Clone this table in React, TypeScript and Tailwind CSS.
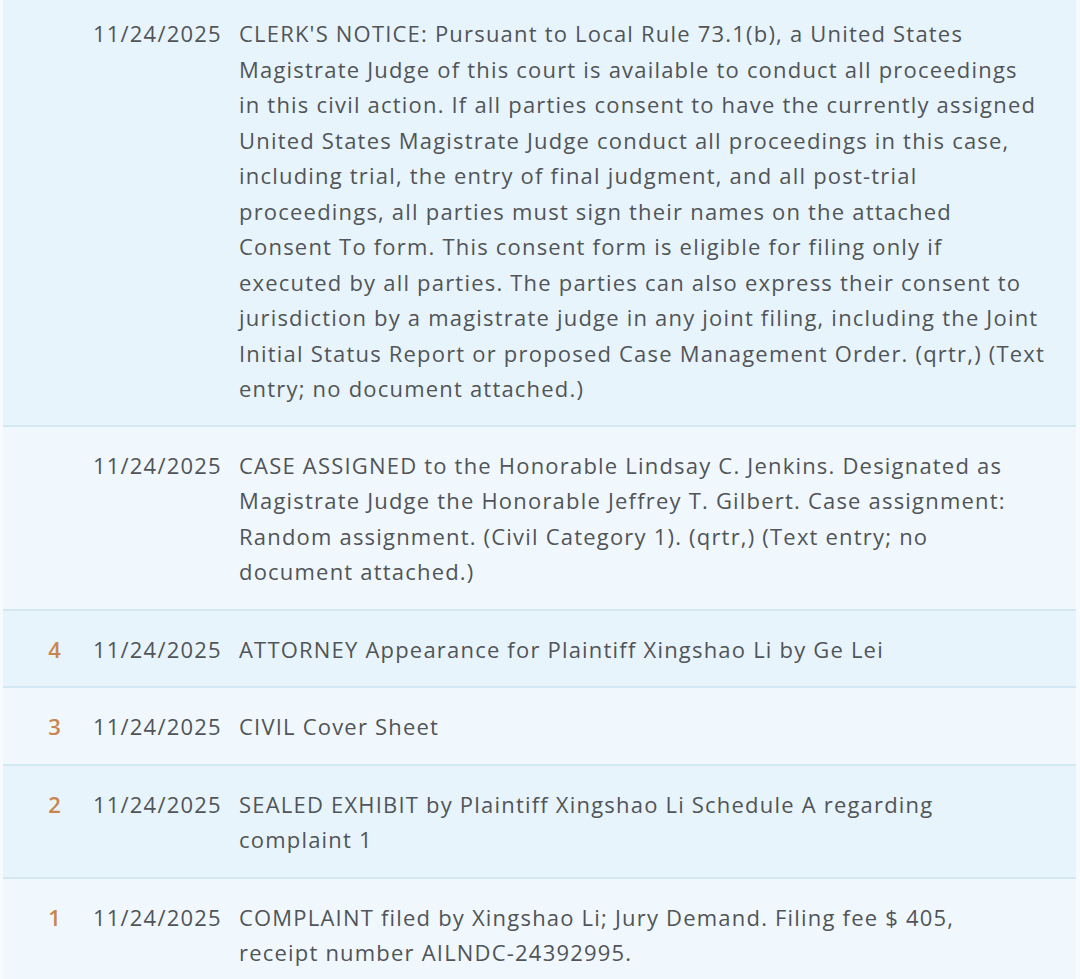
import React from "react";

interface DocketEntry {
  num?: string;
  date: string;
  lines: string[];
}

const entries: DocketEntry[] = [
  {
    date: "11/24/2025",
    lines: [
      "CLERK'S NOTICE: Pursuant to Local Rule 73.1(b), a United States",
      "Magistrate Judge of this court is available to conduct all proceedings",
      "in this civil action. If all parties consent to have the currently assigned",
      "United States Magistrate Judge conduct all proceedings in this case,",
      "including trial, the entry of final judgment, and all post-trial",
      "proceedings, all parties must sign their names on the attached",
      "Consent To form. This consent form is eligible for filing only if",
      "executed by all parties. The parties can also express their consent to",
      "jurisdiction by a magistrate judge in any joint filing, including the Joint",
      "Initial Status Report or proposed Case Management Order. (qrtr,) (Text",
      "entry; no document attached.)",
    ],
  },
  {
    date: "11/24/2025",
    lines: [
      "CASE ASSIGNED to the Honorable Lindsay C. Jenkins. Designated as",
      "Magistrate Judge the Honorable Jeffrey T. Gilbert. Case assignment:",
      "Random assignment. (Civil Category 1). (qrtr,) (Text entry; no",
      "document attached.)",
    ],
  },
  {
    num: "4",
    date: "11/24/2025",
    lines: ["ATTORNEY Appearance for Plaintiff Xingshao Li by Ge Lei"],
  },
  {
    num: "3",
    date: "11/24/2025",
    lines: ["CIVIL Cover Sheet"],
  },
  {
    num: "2",
    date: "11/24/2025",
    lines: [
      "SEALED EXHIBIT by Plaintiff Xingshao Li Schedule A regarding",
      "complaint 1",
    ],
  },
  {
    num: "1",
    date: "11/24/2025",
    lines: [
      "COMPLAINT filed by Xingshao Li; Jury Demand. Filing fee $ 405,",
      "receipt number AILNDC-24392995.",
    ],
  },
];

function DocketRow({ entry, index }: { entry: DocketEntry; index: number }) {
  const shaded = index % 2 === 0;
  return (
    <div
      className={`flex items-start border-b-2 border-[#d3e8f3] ${
        shaded ? "bg-[#e8f4fb]" : "bg-[#f0f8fd]"
      } ${index === 0 ? "pt-[16px] pb-[18px]" : "pt-[21px] pb-[19px]"}`}
    >
      <div className="w-[59px] shrink-0 text-right font-semibold text-[#c8864e]">
        {entry.num}
      </div>
      <div className="ml-[31px] w-[146px] shrink-0 whitespace-nowrap">
        {entry.date}
      </div>
      <div className="flex-1">
        {entry.lines.map((line, i) => (
          <div key={i} className="whitespace-nowrap">
            {line}
          </div>
        ))}
      </div>
    </div>
  );
}

export default function App() {
  return (
    <div
      className="min-h-screen bg-[#f5fbfe] px-[3px] text-[22px] leading-[35.5px] tracking-[1.2px] text-[#515458]"
      style={{ fontFamily: '"Open Sans", "Noto Sans", sans-serif' }}
    >
      <div className="w-[1073px]">
        {entries.map((entry, i) => (
          <DocketRow key={i} entry={entry} index={i} />
        ))}
      </div>
    </div>
  );
}
